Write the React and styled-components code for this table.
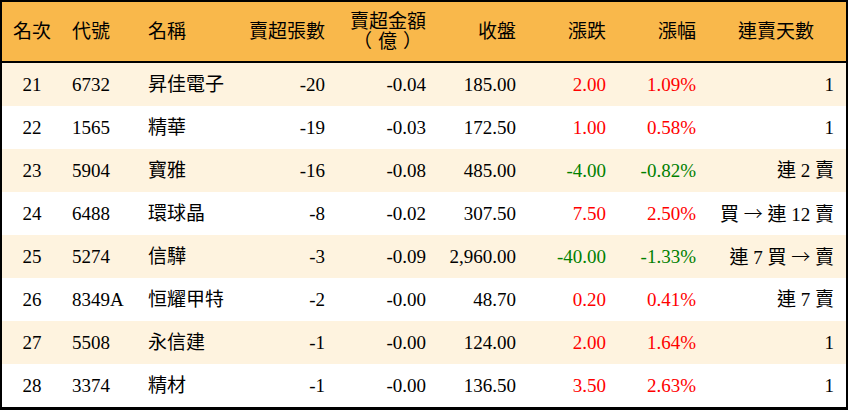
import React from 'react';
import styled, { createGlobalStyle } from 'styled-components';

const Global = createGlobalStyle`
  html, body { margin: 0; padding: 0; background: #fff; }
  body { font-family: "Liberation Serif", "Noto Sans CJK TC", serif; }
`;

const Frame = styled.div`
  width: 848px;
  height: 410px;
  box-sizing: border-box;
  border: 2px solid #000;
  border-bottom-width: 3px;
  color: #000;
  font-size: 19px;
`;

const cols = '60px 76px 110px 87px 101px 90px 90px 90px 140px';

const HeadRow = styled.div`
  display: grid;
  grid-template-columns: ${cols};
  height: 59px;
  background: #f9b84b;
  border-bottom: 2px solid #000;
`;

const Row = styled.div`
  display: grid;
  grid-template-columns: ${cols};
  height: 43px;
  background: ${p => (p.$odd ? '#fef3df' : '#ffffff')};
`;

const Cell = styled.div`
  display: flex;
  flex-direction: column;
  justify-content: center;
  line-height: 20px;
  white-space: pre;
  color: ${p => p.$color || 'inherit'};
  align-items: ${p => (p.$align === 'left' ? 'flex-start' : p.$align === 'center' ? 'center' : 'flex-end')};
  padding: ${p => (p.$align === 'left' ? '0 0 0 10px' : p.$align === 'center' ? '0' : p.$pr ? `0 ${p.$pr}px 0 0` : '0 10px 0 0')};
`;

const Unit = styled.span`
  letter-spacing: 6px;
  margin-right: -2px;
`;

const Arrow = styled.span`
  font-family: "Noto Sans CJK TC", sans-serif;
  font-weight: 300;
`;

const RED = '#ff0000';
const GREEN = '#008000';

const rows = [
  ['21', '6732', '昇佳電子', '-20', '-0.04', '185.00', '2.00', '1.09%', '1'],
  ['22', '1565', '精華', '-19', '-0.03', '172.50', '1.00', '0.58%', '1'],
  ['23', '5904', '寶雅', '-16', '-0.08', '485.00', '-4.00', '-0.82%', '連 2 賣'],
  ['24', '6488', '環球晶', '-8', '-0.02', '307.50', '7.50', '2.50%', '買 → 連 12 賣'],
  ['25', '5274', '信驊', '-3', '-0.09', '2,960.00', '-40.00', '-1.33%', '連 7 買 → 賣'],
  ['26', '8349A', '恒耀甲特', '-2', '-0.00', '48.70', '0.20', '0.41%', '連 7 賣'],
  ['27', '5508', '永信建', '-1', '-0.00', '124.00', '2.00', '1.64%', '1'],
  ['28', '3374', '精材', '-1', '-0.00', '136.50', '3.50', '2.63%', '1'],
];

const Streak = ({ text }) => {
  const parts = text.split('→');
  return (
    <span>
      {parts.map((p, i) => (
        <React.Fragment key={i}>
          {i > 0 && <Arrow>→</Arrow>}
          {p}
        </React.Fragment>
      ))}
    </span>
  );
};

export default function App() {
  return (
    <>
      <Global />
      <Frame>
        <HeadRow>
          <Cell $align="center">名次</Cell>
          <Cell $align="left">代號</Cell>
          <Cell $align="left">名稱</Cell>
          <Cell>賣超張數</Cell>
          <Cell>
            <span>賣超金額</span>
            <Unit>（億）</Unit>
          </Cell>
          <Cell>收盤</Cell>
          <Cell>漲跌</Cell>
          <Cell>漲幅</Cell>
          <Cell $align="center">連賣天數</Cell>
        </HeadRow>
        {rows.map((r, i) => {
          const c = r[6].startsWith('-') ? GREEN : RED;
          return (
            <Row key={r[0]} $odd={i % 2 === 0}>
              <Cell $align="center">{r[0]}</Cell>
              <Cell $align="left">{r[1]}</Cell>
              <Cell $align="left">{r[2]}</Cell>
              <Cell>{r[3]}</Cell>
              <Cell>{r[4]}</Cell>
              <Cell>{r[5]}</Cell>
              <Cell $color={c}>{r[6]}</Cell>
              <Cell $color={c}>{r[7]}</Cell>
              <Cell $pr={12}><Streak text={r[8]} /></Cell>
            </Row>
          );
        })}
      </Frame>
    </>
  );
}
